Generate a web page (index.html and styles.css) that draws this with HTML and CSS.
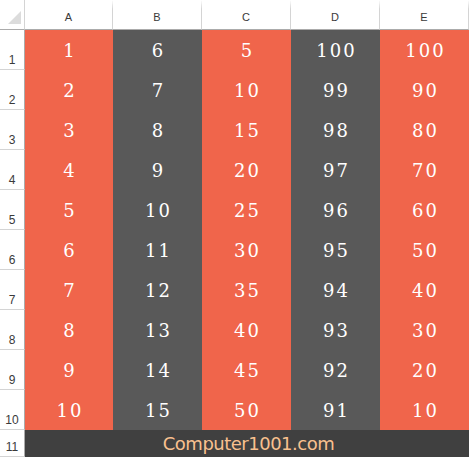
FILE: index.html
```html
<!DOCTYPE html>
<html>
<head>
<meta charset="utf-8">
<link rel="stylesheet" href="styles.css">
</head>
<body>
<div class="sheet">
  <div class="corner"><span class="tri"></span></div>
  <div class="ch">A</div><div class="ch">B</div><div class="ch">C</div><div class="ch">D</div><div class="ch">E</div>

  <div class="rh">1</div><div class="c o">1</div><div class="c g">6</div><div class="c o">5</div><div class="c g">100</div><div class="c o">100</div>
  <div class="rh">2</div><div class="c o">2</div><div class="c g">7</div><div class="c o">10</div><div class="c g">99</div><div class="c o">90</div>
  <div class="rh">3</div><div class="c o">3</div><div class="c g">8</div><div class="c o">15</div><div class="c g">98</div><div class="c o">80</div>
  <div class="rh">4</div><div class="c o">4</div><div class="c g">9</div><div class="c o">20</div><div class="c g">97</div><div class="c o">70</div>
  <div class="rh">5</div><div class="c o">5</div><div class="c g">10</div><div class="c o">25</div><div class="c g">96</div><div class="c o">60</div>
  <div class="rh">6</div><div class="c o">6</div><div class="c g">11</div><div class="c o">30</div><div class="c g">95</div><div class="c o">50</div>
  <div class="rh">7</div><div class="c o">7</div><div class="c g">12</div><div class="c o">35</div><div class="c g">94</div><div class="c o">40</div>
  <div class="rh">8</div><div class="c o">8</div><div class="c g">13</div><div class="c o">40</div><div class="c g">93</div><div class="c o">30</div>
  <div class="rh">9</div><div class="c o">9</div><div class="c g">14</div><div class="c o">45</div><div class="c g">92</div><div class="c o">20</div>
  <div class="rh">10</div><div class="c o">10</div><div class="c g">15</div><div class="c o">50</div><div class="c g">91</div><div class="c o">10</div>
  <div class="rh">11</div><div class="footer">Computer1001.com</div>
</div>
</body>
</html>
```
FILE: styles.css
```css
html, body {
  margin: 0;
  padding: 0;
  background: #ffffff;
}
.sheet {
  display: grid;
  grid-template-columns: 25px 88px 89px 89px 89px 89px;
  grid-template-rows: 30px repeat(10, 40px) 27px;
  width: 469px;
}
.corner {
  display: flex;
  align-items: flex-end;
  justify-content: flex-end;
  padding: 0 3px 5px 0;
  border-right: 1px solid #d4d4d4;
  border-bottom: 1px solid #ababab;
  box-sizing: border-box;
}
.tri {
  width: 0;
  height: 0;
  border-left: 13px solid transparent;
  border-bottom: 13px solid #dcdcdc;
}
.ch {
  font-family: "Liberation Sans", sans-serif;
  font-size: 11px;
  color: #3a3a3a;
  display: flex;
  align-items: flex-end;
  justify-content: center;
  padding-bottom: 6px;
  border-right: 1px solid #d4d4d4;
  border-top: 9px solid #ffffff;
  border-bottom: 1px solid #ababab;
  box-sizing: border-box;
}
.ch:last-of-type { border-right: none; }
.rh {
  font-family: "Liberation Sans", sans-serif;
  font-size: 12px;
  color: #3a3a3a;
  display: flex;
  align-items: flex-end;
  justify-content: center;
  padding-bottom: 2px;
  border-right: 1px solid #ababab;
  border-bottom: 1px solid #d4d4d4;
  box-sizing: border-box;
}
.c {
  display: flex;
  align-items: center;
  justify-content: center;
  font-family: "DejaVu Serif", serif;
  font-size: 18px;
  letter-spacing: 2px;
  color: #ffffff;
  padding-left: 2px;
}
.o { background: #f0654b; }
.g { background: #595959; }
.footer {
  grid-column: 2 / 7;
  background: #404040;
  color: #f9c08f;
  font-family: "DejaVu Sans", sans-serif;
  font-size: 18px;
  letter-spacing: -0.5px;
  display: flex;
  align-items: center;
  justify-content: center;
  padding-left: 3px;
}
```
